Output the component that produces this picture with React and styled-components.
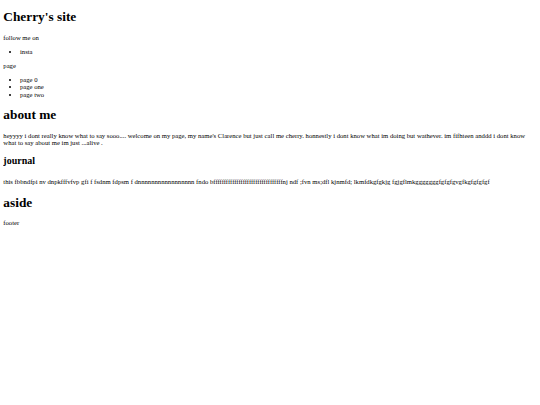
import React from "react";
import styled, { createGlobalStyle } from "styled-components";

const S = 0.41667;
const px = (v) => `${(v * S).toFixed(3)}px`;

const Global = createGlobalStyle`
  html, body { background: #fff; }
  body {
    margin: ${px(8)};
    font-family: "Liberation Serif", "Times New Roman", serif;
    font-size: ${px(16)};
    line-height: ${px(18)};
    color: #000;
  }
`;

const Title = styled.h1`
  font-size: ${px(32)};
  line-height: ${px(37)};
  font-weight: bold;
  margin: ${px(21.44)} 0;
`;

const SiteTitle = styled(Title)`
  margin-top: ${px(14)};
`;

const SubTitle = styled.h2`
  font-size: ${px(24)};
  line-height: ${px(27)};
  font-weight: bold;
  margin: ${px(19.92)} 0;
`;

const Text = styled.p`
  margin: ${px(16)} 0;
`;

const Entry = styled.p`
  margin: ${px(29)} 0 ${px(16)};
`;

const List = styled.ul`
  margin: ${px(16)} 0;
  padding-left: ${px(40)};
  list-style: disc;
`;

const Item = styled.li``;

export default function App() {
  return (
    <>
      <Global />
      <header>
        <SiteTitle>Cherry's site</SiteTitle>
        <Text>follow me on</Text>
        <List>
          <Item>insta</Item>
        </List>
        <nav>
          <Text>page</Text>
          <List>
            <Item>page 0</Item>
            <Item>page one</Item>
            <Item>page two</Item>
          </List>
        </nav>
      </header>
      <main>
        <Title>about me</Title>
        <Text>
          heyyyy i dont really know what to say sooo.... welcome on my page, my name's Clarence but just call me cherry. honnestly i dont know what im doing but wathever. im fifhteen anddd i dont know what to say about me im just ...alive .
        </Text>
        <SubTitle>journal</SubTitle>
        <Entry>
          this fbbndfpi nv dnpkfffvfvp gfi f fsdnm fdpsm f dnnnnnnnnnnnnnnnnn fndo bfffffffffffffffffffffffffffffffffnj ndf ;fvn ms;dfl kjnmfd; lkmfdkgfgkjg fgjgflmkgggggggfgfgfgvgfkgfgfgfgf
        </Entry>
      </main>
      <aside>
        <Title>aside</Title>
      </aside>
      <footer>
        <Text>footer</Text>
      </footer>
    </>
  );
}
